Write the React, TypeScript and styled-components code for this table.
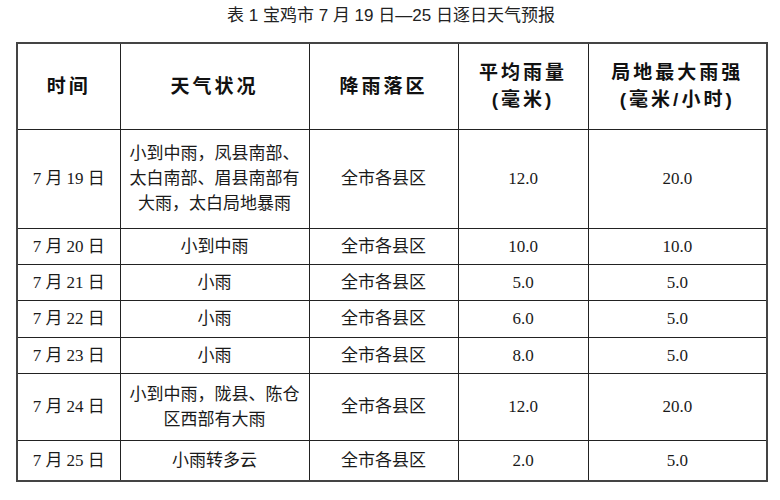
import React from 'react'
import styled, { createGlobalStyle } from 'styled-components'

const GlobalStyle = createGlobalStyle`
  html, body {
    margin: 0;
    padding: 0;
    background: #fff;
  }
  body {
    font-family: 'Liberation Serif', 'Noto Sans CJK SC', serif;
    color: #1a1a1a;
  }
`

const Page = styled.div`
  width: 780px;
  height: 500px;
  padding: 5px 0 0 16px;
  box-sizing: border-box;
`

const Title = styled.div`
  width: 750px;
  text-align: center;
  font-family: 'Liberation Sans', 'Noto Sans CJK SC', sans-serif;
  font-size: 17px;
  line-height: 21px;
  color: #222;
  margin-bottom: 16px;
`

const Table = styled.table`
  width: 750px;
  border-collapse: collapse;
  table-layout: fixed;
  border: 2px solid #444;
`

const Row = styled.tr<{ h: number }>`
  height: ${({ h }) => h}px;
`

const HeadCell = styled.th`
  border: 1.5px solid #222;
  padding: 0;
  font-family: 'Liberation Sans', 'Noto Sans CJK SC', sans-serif;
  font-size: 19px;
  font-weight: 700;
  letter-spacing: 3px;
  line-height: 27px;
  color: #111;
  text-align: center;
  vertical-align: middle;
`

const Cell = styled.td`
  border: 1.5px solid #222;
  padding: 0;
  font-size: 17px;
  line-height: 25px;
  text-align: center;
  vertical-align: middle;
  color: #1a1a1a;
`

const COLS = [103, 189, 149, 130, 179]

type Forecast = {
  day: string
  weather: string[]
  area: string
  avg: string
  max: string
  h: number
}

const ROWS: Forecast[] = [
  {
    day: '7 月 19 日',
    weather: ['小到中雨，凤县南部、', '太白南部、眉县南部有', '大雨，太白局地暴雨'],
    area: '全市各县区',
    avg: '12.0',
    max: '20.0',
    h: 99,
  },
  { day: '7 月 20 日', weather: ['小到中雨'], area: '全市各县区', avg: '10.0', max: '10.0', h: 36 },
  { day: '7 月 21 日', weather: ['小雨'], area: '全市各县区', avg: '5.0', max: '5.0', h: 36 },
  { day: '7 月 22 日', weather: ['小雨'], area: '全市各县区', avg: '6.0', max: '5.0', h: 37 },
  { day: '7 月 23 日', weather: ['小雨'], area: '全市各县区', avg: '8.0', max: '5.0', h: 36 },
  {
    day: '7 月 24 日',
    weather: ['小到中雨，陇县、陈仓', '区西部有大雨'],
    area: '全市各县区',
    avg: '12.0',
    max: '20.0',
    h: 67,
  },
  { day: '7 月 25 日', weather: ['小雨转多云'], area: '全市各县区', avg: '2.0', max: '5.0', h: 41 },
]

const Lines = ({ lines }: { lines: string[] }) => (
  <>
    {lines.map((l, i) => (
      <React.Fragment key={i}>
        {i > 0 && <br />}
        {l}
      </React.Fragment>
    ))}
  </>
)

const App = () => {
  return (
    <Page>
      <GlobalStyle />
      <Title>表 1 宝鸡市 7 月 19 日—25 日逐日天气预报</Title>
      <Table>
        <colgroup>
          {COLS.map((w, i) => (
            <col key={i} style={{ width: w }} />
          ))}
        </colgroup>
        <thead>
          <Row h={86}>
            <HeadCell>时间</HeadCell>
            <HeadCell>天气状况</HeadCell>
            <HeadCell>降雨落区</HeadCell>
            <HeadCell>
              平均雨量
              <br />
              (毫米)
            </HeadCell>
            <HeadCell>
              局地最大雨强
              <br />
              (毫米/小时)
            </HeadCell>
          </Row>
        </thead>
        <tbody>
          {ROWS.map((r) => (
            <Row key={r.day} h={r.h}>
              <Cell>{r.day}</Cell>
              <Cell>
                <Lines lines={r.weather} />
              </Cell>
              <Cell>{r.area}</Cell>
              <Cell>{r.avg}</Cell>
              <Cell>{r.max}</Cell>
            </Row>
          ))}
        </tbody>
      </Table>
    </Page>
  )
}

export default App
